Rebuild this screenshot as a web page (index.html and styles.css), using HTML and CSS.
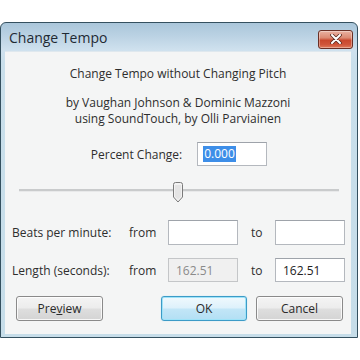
FILE: index.html
```html
<!DOCTYPE html>
<html>
<head>
<meta charset="utf-8">
<link rel="stylesheet" href="styles.css">
</head>
<body>
<div class="window">
  <div class="titlebar">
    <span class="title">Change Tempo</span>
    <div class="close">
      <svg width="14" height="10" viewBox="0 0 14 10"><path d="M3 1 L11 9 M11 1 L3 9" stroke="#5a2a20" stroke-width="3.6" stroke-linecap="round"/><path d="M3 1 L11 9 M11 1 L3 9" stroke="#ffffff" stroke-width="2" stroke-linecap="round"/></svg>
    </div>
  </div>
  <div class="content">
    <p class="heading">Change Tempo without Changing Pitch</p>
    <div class="credits">
      <div class="line">by Vaughan Johnson &amp; Dominic Mazzoni</div>
      <div class="line">using SoundTouch, by Olli Parviainen</div>
    </div>
    <div class="percent">
      <span>Percent Change:</span>
      <div class="field"><span class="sel">0.000</span></div>
    </div>
    <div class="slider">
      <div class="track"></div>
      <svg class="thumb" width="12" height="21" viewBox="0 0 12 21"><path d="M1.5 2.5 Q1.5 0.5 3.5 0.5 H8.5 Q10.5 0.5 10.5 2.5 V15 L6 20 L1.5 15 Z" fill="#f2f2f2" stroke="#7a7a7a" stroke-width="1"/><path d="M3 3 H9 V14.5 L6 17.5 L3 14.5 Z" fill="#e4e4e4"/></svg>
    </div>
    <div class="grid">
      <span>Beats per minute:</span>
      <span>from</span>
      <div class="field"></div>
      <span class="to">to</span>
      <div class="field"></div>
      <span>Length (seconds):</span>
      <span>from</span>
      <div class="field disabled">162.51</div>
      <span class="to">to</span>
      <div class="field">162.51</div>
    </div>
    <div class="buttons">
      <button class="btn">Pre<u>v</u>iew</button>
      <button class="btn ok">OK</button>
      <button class="btn">Cancel</button>
    </div>
  </div>
</div>
</body>
</html>
```
FILE: styles.css
```css
html, body {
  margin: 0;
  padding: 0;
  background: #ffffff;
}
body {
  font-family: "Open Sans", "Noto Sans", sans-serif;
  font-size: 12px;
  color: #2e2e2e;
}
.window {
  margin-top: 22px;
  width: 358px;
  height: 316px;
  box-sizing: border-box;
  border: 1px solid #34505f;
  border-radius: 6px 6px 0 0;
  background: linear-gradient(#aac6da 0px, #bcd3e4 14px, #cfe1ee 27px, #c9dfeb 40px, #c6dde9 100%);
  padding: 0 6px 3px 4px;
  display: flex;
  flex-direction: column;
}
.titlebar {
  height: 27px;
  display: flex;
  align-items: center;
  justify-content: space-between;
  padding-left: 4px;
  padding-top: 1px;
}
.title {
  font-size: 14px;
  color: #1f2a33;
}
.close {
  width: 33px;
  height: 17px;
  margin-top: 3px;
  margin-right: -2px;
  border: 1px solid #6a2f25;
  border-radius: 3px;
  background: linear-gradient(#eab2a2 0%, #dc8a73 40%, #c9472c 55%, #d0553a 80%, #e07a5a 100%);
  display: flex;
  align-items: center;
  justify-content: center;
  box-shadow: inset 0 0 0 1px rgba(255,255,255,0.35);
}
.content {
  flex: 1;
  background: #f4f5f5;
  display: flex;
  flex-direction: column;
  border-top: 1px solid #dfe8ee;
}
.heading {
  margin: 14px 0 0;
  text-align: center;
  line-height: 16px;
}
.credits {
  margin: 13px 0 0;
  text-align: center;
}
.credits .line {
  height: 16px;
  line-height: 16px;
}
.percent {
  margin-top: 15px;
  display: flex;
  justify-content: center;
  align-items: center;
  gap: 15px;
  padding-left: 2px;
}
.field {
  width: 70px;
  height: 24px;
  box-sizing: border-box;
  border: 1px solid #b4b8be;
  border-top-color: #9ea3aa;
  background: #ffffff;
  display: flex;
  align-items: center;
  padding-left: 7px;
  color: #222;
}
.sel {
  background: #3d8ee8;
  color: #ffffff;
  margin-left: -2px;
  padding: 0 1px;
  line-height: 16px;
}
.slider {
  position: relative;
  height: 22px;
  margin: 16px 0 0 14px;
  width: 320px;
}
.track {
  position: absolute;
  left: 0;
  right: 0;
  top: 7px;
  height: 2px;
  background: #c9cbcc;
  border-bottom: 1px solid #e8e9ea;
}
.thumb {
  position: absolute;
  left: 153px;
  top: 0;
}
.grid {
  margin-top: 16px;
  padding-left: 7px;
  display: grid;
  grid-template-columns: 117px 39px 70px 37px 70px;
  grid-template-rows: 25px 24px;
  row-gap: 13px;
  align-items: center;
}
.grid .field {
  height: 100%;
}
.grid .to {
  padding-left: 13px;
}
.field.disabled {
  background: #f0f0f0;
  border-color: #c4c6c8;
  color: #8a8a8a;
}
.buttons {
  margin-top: 14px;
  display: flex;
  padding-left: 11px;
}
.btn {
  width: 87px;
  height: 25px;
  box-sizing: border-box;
  font-family: "Open Sans", "Noto Sans", sans-serif;
  font-size: 12px;
  color: #2a2a2a;
  border: 1px solid #8a8a8a;
  border-radius: 3px;
  background: linear-gradient(#f4f4f4 0%, #ececec 48%, #dedede 52%, #d4d4d4 100%);
  box-shadow: inset 0 0 0 1px rgba(255,255,255,0.8);
  padding: 0;
}
.btn.ok {
  margin-left: 58px;
  width: 86px;
  border-color: #3c9bc7;
  background: linear-gradient(#f0f9fd 0%, #ddf1fb 48%, #c2e6f7 52%, #b3dff4 100%);
  box-shadow: inset 0 0 0 1px #9fe3f8, 0 0 1px #8fd0ee;
}
.btn.ok + .btn {
  margin-left: 9px;
}
u {
  text-decoration-thickness: 1px;
}
```
